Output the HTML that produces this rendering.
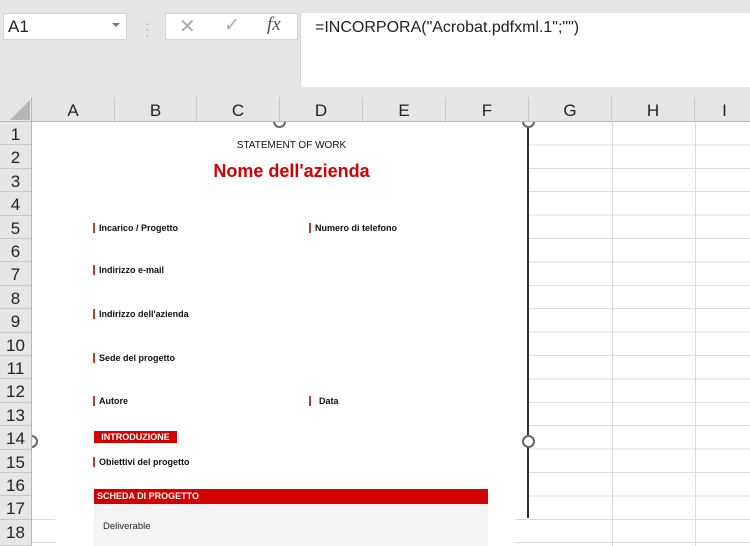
<!DOCTYPE html>
<html><head><style>
body{margin:0;width:750px;height:546px;overflow:hidden;background:#fff;font-family:"Liberation Sans",Arial,sans-serif;position:relative}
.a{position:absolute}
.top{left:0;top:0;width:750px;height:97px;background:#e6e6e6}
.nb{left:3px;top:13px;width:124px;height:27px;background:#fff;border:1px solid #d4d4d4;box-sizing:border-box}
.fb{left:300px;top:13px;width:450px;height:74px;background:#fff;border-left:1px solid #d4d4d4}
.ch{top:97px;height:25px;background:#e6e6e6;border-right:1px solid #c8c8c8;border-bottom:1px solid #b8b8b8;box-sizing:border-box;text-align:center;font-size:17px;line-height:27px;color:#222}
.rh{left:0;width:32px;background:#e6e6e6;border-bottom:1px solid #c8c8c8;border-right:1px solid #b8b8b8;box-sizing:border-box;text-align:center;font-size:17px;color:#222}
.grid{top:122px;height:424px;background:repeating-linear-gradient(to bottom,transparent 0,transparent 22.4px,#dcdcdc 22.4px,#dcdcdc 23.4px)}
.vl{width:1px;background:#dcdcdc}
.lb{font-size:9px;font-weight:bold;color:#111;border-left:2px solid #c0392b;padding-left:4px;line-height:10px}
.circ{width:9px;height:9px;border:2px solid #666;border-radius:50%;background:#fff}
</style></head><body>
<div class="a top"></div>
<div class="a nb"><span class="a" style="left:4px;top:3px;font-size:17px;color:#222">A1</span><span class="a" style="left:108px;top:9px;border-left:4px solid transparent;border-right:4px solid transparent;border-top:4px solid #777"></span></div>
<div class="a" style="left:145px;top:20px;color:#aaa;font-size:14px;line-height:6px">·<br>·<br>·</div>
<div class="a" style="left:165px;top:13px;width:133px;height:27px;background:#fff;border:1px solid #d4d4d4;box-sizing:border-box"></div>
<div class="a" style="left:179px;top:14px;font-size:20px;color:#aaa">✕</div>
<div class="a" style="left:224px;top:14px;font-size:19px;color:#aaa">✓</div>
<div class="a" style="left:267px;top:14px;font-size:19px;font-style:italic;font-family:'Liberation Serif',serif;color:#555">fx</div>
<div class="a fb"><span class="a" style="left:14px;top:6px;font-size:16px;color:#222">=INCORPORA("Acrobat.pdfxml.1";"")</span></div>
<div class="a" style="left:0;top:97px;width:32px;height:25px;background:#e6e6e6;border-right:1px solid #b8b8b8;border-bottom:1px solid #b8b8b8;box-sizing:border-box"></div>
<div class="a" style="left:10px;top:100px;width:0;height:0;border-left:20px solid transparent;border-bottom:20px solid #b5b5b5"></div>
<div class="a ch" style="left:32px;width:83px">A</div>
<div class="a ch" style="left:115px;width:82px">B</div>
<div class="a ch" style="left:197px;width:83px">C</div>
<div class="a ch" style="left:280px;width:83px">D</div>
<div class="a ch" style="left:363px;width:83px">E</div>
<div class="a ch" style="left:446px;width:83px">F</div>
<div class="a ch" style="left:529px;width:83px">G</div>
<div class="a ch" style="left:612px;width:83px">H</div>
<div class="a ch" style="left:695px;width:60px">I</div>
<div class="a rh" style="top:122px;height:23.4px;line-height:25px">1</div>
<div class="a rh" style="top:145.4px;height:23.4px;line-height:25px">2</div>
<div class="a rh" style="top:168.8px;height:23.4px;line-height:25px">3</div>
<div class="a rh" style="top:192.2px;height:23.4px;line-height:25px">4</div>
<div class="a rh" style="top:215.6px;height:23.4px;line-height:25px">5</div>
<div class="a rh" style="top:239px;height:23.4px;line-height:25px">6</div>
<div class="a rh" style="top:262.4px;height:23.4px;line-height:25px">7</div>
<div class="a rh" style="top:285.8px;height:23.4px;line-height:25px">8</div>
<div class="a rh" style="top:309.2px;height:23.4px;line-height:25px">9</div>
<div class="a rh" style="top:332.6px;height:23.4px;line-height:25px">10</div>
<div class="a rh" style="top:356px;height:23.4px;line-height:25px">11</div>
<div class="a rh" style="top:379.4px;height:23.4px;line-height:25px">12</div>
<div class="a rh" style="top:402.8px;height:23.4px;line-height:25px">13</div>
<div class="a rh" style="top:426.2px;height:23.4px;line-height:25px">14</div>
<div class="a rh" style="top:449.6px;height:23.4px;line-height:25px">15</div>
<div class="a rh" style="top:473px;height:23.4px;line-height:25px">16</div>
<div class="a rh" style="top:496.4px;height:23.4px;line-height:25px">17</div>
<div class="a rh" style="top:519.8px;height:26.2px;line-height:25px">18</div>
<div class="a grid" style="left:32px;width:718px"></div>
<div class="a vl" style="left:612px;top:122px;height:424px"></div>
<div class="a vl" style="left:695px;top:122px;height:424px"></div>
<div class="a" style="left:32px;top:122px;width:496px;height:396px;background:#fff"></div>
<div class="a" style="left:55px;top:518px;width:460px;height:28px;background:#fff"></div>
<div class="a" style="left:527px;top:122px;width:2px;height:396px;background:#333"></div>
<div class="a" style="top:140px;width:375px;text-align:center;font-size:10px;color:#111;left:104px">STATEMENT OF WORK</div>
<div class="a" style="left:104px;top:161px;width:375px;text-align:center;font-size:18px;font-weight:bold;color:#d40000">Nome dell'azienda</div>
<div class="a lb" style="left:93px;top:223px">Incarico / Progetto</div>
<div class="a lb" style="left:309px;top:223px">Numero di telefono</div>
<div class="a lb" style="left:93px;top:265px">Indirizzo e-mail</div>
<div class="a lb" style="left:93px;top:309px">Indirizzo dell'azienda</div>
<div class="a lb" style="left:93px;top:353px">Sede del progetto</div>
<div class="a lb" style="left:93px;top:396px">Autore</div>
<div class="a lb" style="left:309px;top:396px;padding-left:8px">Data</div>
<div class="a" style="left:94px;top:431px;width:83px;height:12px;background:#d40000;color:#fff;font-size:9px;font-weight:bold;line-height:12px;text-align:center">INTRODUZIONE</div>
<div class="a lb" style="left:93px;top:457px">Obiettivi del progetto</div>
<div class="a" style="left:94px;top:489px;width:394px;height:15px;background:#d40000;color:#fff;font-size:9px;font-weight:bold;line-height:15px;padding-left:3px;box-sizing:border-box">SCHEDA DI PROGETTO</div>
<div class="a" style="left:94px;top:504px;width:394px;height:42px;background:#f4f4f4"></div>
<div class="a" style="left:103px;top:521px;font-size:9.5px;color:#222">Deliverable</div>
<div class="a" style="left:270px;top:122px;width:20px;height:8px;overflow:hidden"><div class="a circ" style="left:3px;top:-7px"></div></div>
<div class="a" style="left:519px;top:122px;width:20px;height:8px;overflow:hidden"><div class="a circ" style="left:3px;top:-7px"></div></div>
<div class="a circ" style="left:522px;top:435px"></div>
<div class="a" style="left:32px;top:432px;width:8px;height:20px;overflow:hidden"><div class="a circ" style="left:-7px;top:3px"></div></div>
</body></html>
